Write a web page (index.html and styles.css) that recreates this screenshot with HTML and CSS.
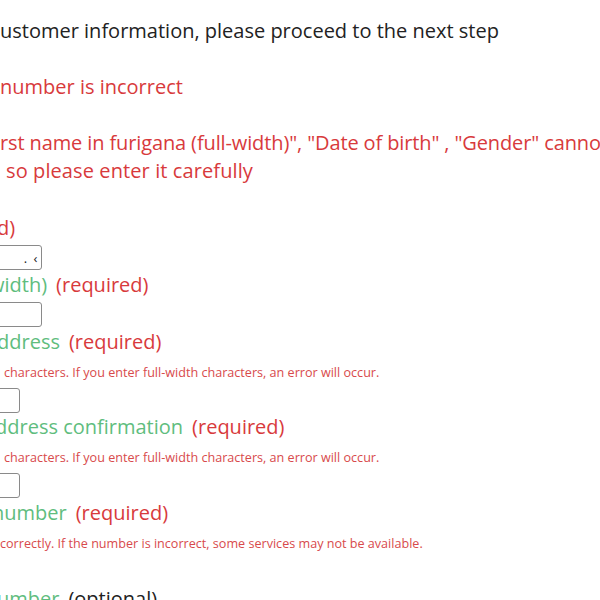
FILE: index.html
```html
<!DOCTYPE html>
<html lang="en">
<head>
<meta charset="utf-8">
<title>Customer information</title>
<link rel="stylesheet" href="styles.css">
</head>
<body>
<main class="page">
  <p class="intro">ustomer information, please proceed to the next step</p>
  <p class="error">number is incorrect</p>
  <p class="error tight">rst name in furigana (full-width)", "Date of birth" , "Gender" cannot be changed later,<br><span class="cont">so please enter it carefully</span></p>

  <form class="form">
    <div class="field">
      <label class="label shift-3"><span class="req">d)</span></label>
      <div class="box wide"><span class="val">. ‹</span></div>
    </div>
    <div class="field">
      <label class="label shift-11"><span class="name">width)</span><span class="req">(required)</span></label>
      <div class="box wide"></div>
    </div>
    <div class="field">
      <label class="label shift-3"><span class="name">ddress</span><span class="req">(required)</span></label>
      <p class="note indent">characters. If you enter full-width characters, an error will occur.</p>
      <div class="box narrow"></div>
    </div>
    <div class="field flush">
      <label class="label shift-5"><span class="name">ddress confirmation</span><span class="req">(required)</span></label>
      <p class="note indent">characters. If you enter full-width characters, an error will occur.</p>
      <div class="box narrow"></div>
    </div>
    <div class="field">
      <label class="label shift-8"><span class="name">number</span><span class="req">(required)</span></label>
      <p class="note">correctly. If the number is incorrect, some services may not be available.</p>
      <div class="box hidden"></div>
    </div>
    <div class="field">
      <label class="label shift-3"><span class="name">umber</span><span class="opt">(optional)</span></label>
    </div>
  </form>
</main>
</body>
</html>
```
FILE: styles.css
```css
html, body {
  margin: 0;
  padding: 0;
  overflow: hidden;
  background: #ffffff;
}
.page {
  font-family: "Open Sans", "Noto Sans CJK JP", sans-serif;
  font-size: 20px;
  line-height: 28px;
  color: #222222;
  padding-top: 17px;
  white-space: nowrap;
}
.page p {
  margin: 0 0 28px 0;
}
.intro {
  color: #222222;
}
.error {
  color: #d83a3c;
}
.tight {
  letter-spacing: -0.12px;
}
.cont {
  padding-left: 6px;
  letter-spacing: 0.1px;
}
.form {
  display: flex;
  flex-direction: column;
}
.field {
  display: flex;
  flex-direction: column;
  align-items: flex-start;
}
.label {
  display: block;
  font-size: 20px;
  line-height: 28px;
  margin-top: 1px;
}
.flush .label {
  margin-top: 0;
}
.shift-3 { margin-left: -3px; }
.shift-5 { margin-left: -5px; }
.shift-8 { margin-left: -8px; }
.shift-11 { margin-left: -11px; }
.name {
  color: #5fbd7e;
  margin-right: 9px;
}
.req {
  color: #d83a3c;
}
.opt {
  color: #222222;
}
.page .note {
  margin: 8px 0 6px 0;
  font-size: 12.6px;
  line-height: 18px;
  color: #d84a4c;
}
.page .indent {
  padding-left: 4px;
}
.box {
  box-sizing: border-box;
  height: 25px;
  margin: 3px 0 0 0;
  border: 1px solid #8a8a8a;
  border-radius: 3px;
  display: flex;
  align-items: center;
  justify-content: flex-end;
  font-size: 13px;
  color: #222;
}
.wide {
  width: 150px;
  margin-left: -108px;
}
.narrow {
  width: 150px;
  margin-left: -130px;
}
.hidden {
  width: 100px;
  margin-left: -110px;
}
.note + .box {
  margin-top: 0;
}
.val {
  padding-right: 2px;
  letter-spacing: 1.5px;
}
```
